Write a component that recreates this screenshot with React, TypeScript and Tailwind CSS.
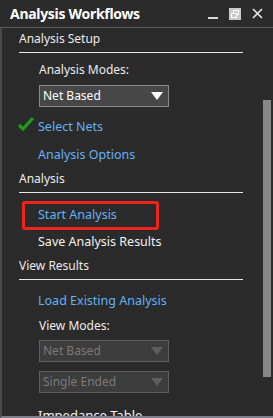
import React from "react";

const font = { fontFamily: '"Noto Sans", "Open Sans", sans-serif' };

function Dropdown({ label, disabled }: { label: string; disabled?: boolean }) {
  return (
    <div
      className={`ml-[37px] flex h-[22px] w-[130px] shrink-0 items-center justify-between border px-[3px] ${
        disabled ? "border-[#5e5e5e] bg-[#3c3c3c] text-[#7a7a7a]" : "border-[#8a8a8a] bg-[#474747] text-white"
      }`}
    >
      <span className="text-[12px] leading-none">{label}</span>
      <svg width="12" height="8" viewBox="0 0 12 8" className="mr-[2px]">
        <path d="M0 0 H12 L6 8 Z" fill={disabled ? "#5e5e5e" : "#ffffff"} />
      </svg>
    </div>
  );
}

function Row({ children, className = "" }: { children: React.ReactNode; className?: string }) {
  return <div className={`flex h-[22px] shrink-0 items-center ${className}`}>{children}</div>;
}

export default function App() {
  return (
    <div className="flex h-[418px] w-[273px] flex-col overflow-hidden bg-[#2a2a2a] text-[#ececec]" style={font}>
      {/* title bar */}
      <div className="flex h-[28px] shrink-0 items-center border-b border-[#5c5c5c] bg-[#2b2b2b] pl-[10px] pr-[10px]">
        <span className="text-[14px] font-bold tracking-[-0.3px] text-white">Analysis Workflows</span>
        <div className="ml-auto flex items-center gap-[11px]">
          <div className="mt-[9px] h-[2px] w-[10px] bg-[#d8d8d8]" />
          <svg width="12" height="12" viewBox="0 0 12 12">
            <rect width="12" height="12" fill="#c9c9c9" />
            <rect x="4.5" y="2.5" width="5" height="4" fill="none" stroke="#ffffff" />
            <rect x="2.5" y="5.5" width="5" height="4" fill="#c9c9c9" stroke="#ffffff" />
          </svg>
          <svg width="11" height="11" viewBox="0 0 11 11">
            <path d="M1 1 L10 10 M10 1 L1 10" stroke="#e8e8e8" strokeWidth="1.6" />
          </svg>
        </div>
      </div>

      <div className="flex min-h-0 flex-1 border-b-2 border-l-2 border-[#4a4a4a] border-b-[#7f7f8c]">
        <div className="flex min-w-0 flex-1 flex-col overflow-hidden text-[12px]">
          <Row className="ml-[17px]">Analysis Setup</Row>
          <div className="ml-[17px] mt-[2px] h-[1px] w-[224px] shrink-0 bg-[#e6e6e6]" />
          <Row className="ml-[37px] mt-[6px]">Analysis Modes:</Row>
          <div className="mt-[4px] shrink-0">
            <Dropdown label="Net Based" />
          </div>
          <Row className="ml-[16px] mt-[9px] text-[12.5px] text-[#63b1f7]">
            <svg width="16" height="14" viewBox="0 0 16 14" className="mr-[4px] mt-[-6px]">
              <path d="M1 8 L5 12 L15 1" fill="none" stroke="#1e9a1e" strokeWidth="3.2" strokeLinejoin="round" />
            </svg>
            Select Nets
          </Row>
          <Row className="ml-[36px] mt-[6px] text-[12.5px] text-[#63b1f7]">Analysis Options</Row>
          <Row className="ml-[17px] mt-[2px]">Analysis</Row>
          <div className="ml-[17px] mt-[2px] h-[1px] w-[224px] shrink-0 bg-[#e6e6e6]" />
          <div className="ml-[20px] mt-[8px] flex h-[29px] w-[137px] shrink-0 items-center rounded-[3px] border-[3px] border-[#f0231b] pl-[13px] text-[12.5px] text-[#63b1f7]">
            Start Analysis
          </div>
          <Row className="ml-[36px] mt-[1px] text-[12.5px] text-[#f2f2f2]">Save Analysis Results</Row>
          <Row className="ml-[17px] mt-[2px]">View Results</Row>
          <div className="ml-[17px] mt-[2px] h-[1px] w-[224px] shrink-0 bg-[#e6e6e6]" />
          <Row className="ml-[36px] mt-[10px] text-[12.5px] text-[#63b1f7]">Load Existing Analysis</Row>
          <Row className="ml-[37px] mt-[3px]">View Modes:</Row>
          <div className="mt-[3px] shrink-0">
            <Dropdown label="Net Based" disabled />
          </div>
          <div className="mt-[9px] shrink-0">
            <Dropdown label="Single Ended" disabled />
          </div>
          <Row className="ml-[36px] mt-[12px] text-[13px] text-[#f2f2f2]">Impedance Table</Row>
        </div>
        {/* scrollbar */}
        <div className="w-[10px] shrink-0 pr-[2px]">
          <div className="mt-[72px] h-[277px] w-[8px] bg-[#878787]" />
        </div>
      </div>
    </div>
  );
}
